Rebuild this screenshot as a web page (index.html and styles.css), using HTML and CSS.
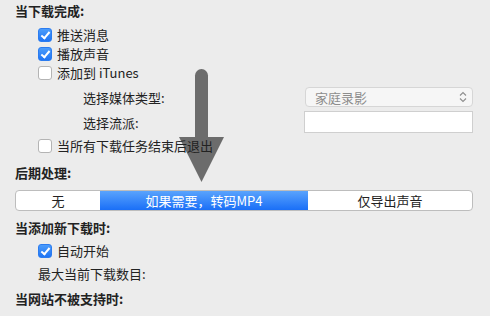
FILE: index.html
```html
<!DOCTYPE html>
<html lang="zh">
<head>
    <meta charset="UTF-8">
    <title>下载偏好设置</title>
    <link rel="stylesheet" href="styles.css">
</head>
<body>
    <div class="prefs">
        <div class="title">当下载完成:</div>
        <div class="group">
            <label class="check-row"><span class="box checked"></span>推送消息</label>
            <label class="check-row"><span class="box checked"></span>播放声音</label>
            <label class="check-row"><span class="box"></span>添加到 iTunes</label>
        </div>

        <div class="field-row media-row">
            <span class="field-label">选择媒体类型:</span>
            <div class="select">
                <span>家庭录影</span>
                <svg class="chevrons" width="8" height="12" viewBox="0 0 8 12">
                    <path d="M1 4.5 L4 1.5 L7 4.5 M1 7.5 L4 10.5 L7 7.5" fill="none" stroke="#8e8e8e" stroke-width="1.1"/>
                </svg>
            </div>
        </div>
        <div class="field-row genre-row">
            <span class="field-label">选择流派:</span>
            <div class="text-input"></div>
        </div>

        <label class="check-row quit-row"><span class="box"></span>当所有下载任务结束后退出</label>

        <div class="title post-title">后期处理:</div>
        <div class="segments">
            <div class="seg seg-none">无</div>
            <div class="seg seg-on">如果需要，转码MP4</div>
            <div class="seg seg-audio">仅导出声音</div>
        </div>

        <div class="title add-title">当添加新下载时:</div>
        <label class="check-row auto-row"><span class="box checked"></span>自动开始</label>
        <div class="plain-row">最大当前下载数目:</div>

        <div class="title site-title">当网站不被支持时:</div>
    </div>

    <!-- annotation arrow laid over the window -->
    <svg class="arrow" width="48" height="116" viewBox="178 68 48 116">
        <path d="M195 75.5 A6.5 6.5 0 0 1 208 75.5 L208 138 L195 138 Z" fill="#6c6c6c"/>
        <polygon points="179,137 224,137 201.5,182" fill="#6c6c6c"/>
    </svg>
</body>
</html>
```

FILE: styles.css
```css
* {
    box-sizing: border-box;
}
html {
    background-color: #ececec;
}
body {
    margin: 0;
    font-family: "Noto Sans CJK SC", "Liberation Sans", sans-serif;
    font-size: 13px;
    color: #222;
}
.prefs {
    position: relative;
    z-index: 1;
    padding: 2px 17px 0 15px;
}
.title {
    height: 18px;
    line-height: 18px;
    font-weight: bold;
}
.group {
    margin-top: 5px;
}
.check-row {
    display: flex;
    align-items: center;
    height: 19px;
    padding-left: 23px;
}
.box {
    width: 14px;
    height: 14px;
    margin-right: 5px;
    border: 1px solid #b4b4b4;
    border-radius: 3px;
    background-color: #fff;
    position: relative;
}
.box.checked {
    border-color: #2b7cf0;
    background: linear-gradient(#4b9cfb, #1f74f4);
}
.box.checked::after {
    content: "";
    position: absolute;
    left: 4px;
    top: 1px;
    width: 3px;
    height: 7px;
    border: solid #fff;
    border-width: 0 2px 2px 0;
    transform: rotate(40deg);
}
.field-row {
    display: flex;
    align-items: center;
    padding-left: 68px;
}
.field-label {
    width: 221px;
}
.media-row {
    margin-top: 5px;
    height: 20px;
}
.select {
    display: flex;
    align-items: center;
    justify-content: space-between;
    width: 168px;
    height: 20px;
    padding: 0 5px 0 9px;
    margin-left: 1px;
    background-color: #f6f6f6;
    border: 1px solid #d6d6d6;
    border-radius: 4px;
    color: #8d8d8d;
}
.genre-row {
    margin-top: 4px;
    height: 22px;
}
.text-input {
    width: 169px;
    height: 22px;
    background-color: #fff;
    border: 1px solid #cfcfcf;
}
.quit-row {
    margin-top: 3px;
}
.post-title {
    margin-top: 9px;
}
.segments {
    display: flex;
    margin-top: 8px;
    height: 21px;
    width: 458px;
    border: 1px solid #bdbdbd;
    border-radius: 4px;
    background-color: #fff;
    overflow: hidden;
}
.seg {
    display: flex;
    align-items: center;
    justify-content: center;
}
.seg-none {
    width: 84px;
}
.seg-on {
    width: 208px;
    color: #fff;
    background: linear-gradient(#5da6fd, #1a6ff7);
    border-bottom: 1px solid #2a4fe6;
    margin-bottom: -1px;
    margin-top: -1px;
}
.seg-audio {
    flex: 1;
}
.add-title {
    margin-top: 8px;
}
.auto-row {
    margin-top: 4px;
}
.plain-row {
    height: 18px;
    line-height: 18px;
    margin-top: 5px;
    padding-left: 23px;
}
.site-title {
    margin-top: 7px;
}
.arrow {
    position: absolute;
    left: 178px;
    top: 68px;
    z-index: 0;
}
```
